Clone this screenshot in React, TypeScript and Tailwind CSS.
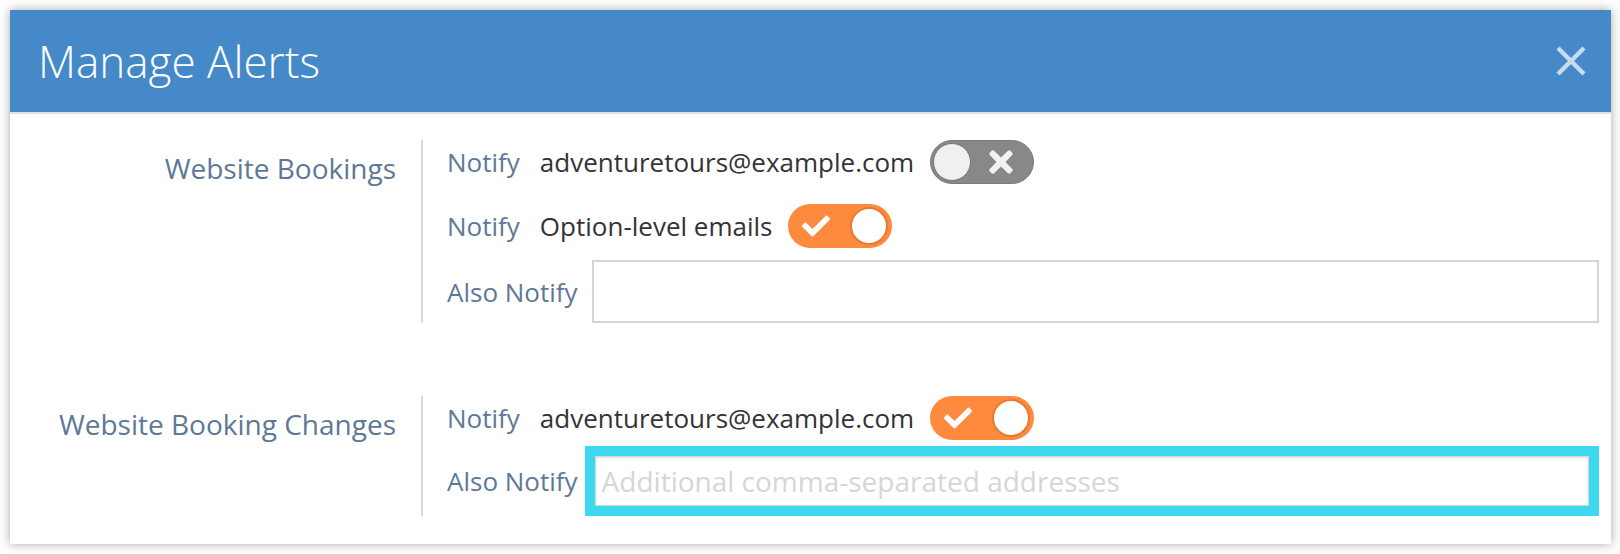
import React from "react";
import { FaCheck, FaTimes } from "react-icons/fa";

const font = { fontFamily: '"Open Sans", "Liberation Sans", sans-serif' };

type ToggleProps = { on: boolean };

const Toggle = ({ on }: ToggleProps) => {
  if (on) {
    return (
      <div className="relative flex h-[44px] w-[104px] shrink-0 items-center rounded-full bg-[#fd8a3d]">
        <FaCheck className="ml-[14px] text-[28px] text-white" />
        <div className="absolute right-[4px] top-[3px] h-[38px] w-[38px] rounded-full border-2 border-[#e87a30] bg-white" />
      </div>
    );
  }
  return (
    <div className="relative flex h-[44px] w-[104px] shrink-0 items-center justify-end rounded-full border border-[#7c7c7c] bg-[#888888]">
      <FaTimes className="mr-[15px] text-[34px] text-[#f2f2f2]" />
      <div className="absolute left-[2px] top-[2px] h-[38px] w-[38px] rounded-full border border-[#777] bg-[#f0f0f0]" />
    </div>
  );
};

const Label = ({ children }: { children: React.ReactNode }) => (
  <span className="shrink-0 text-[26px] leading-none text-[#5e7897]">{children}</span>
);

const App = () => {
  return (
    <div className="min-h-screen bg-white p-[10px]" style={font}>
      <div className="w-[1601px] bg-white shadow-[0_0_10px_rgba(0,0,0,0.35)]">
        <div className="flex h-[102px] items-center justify-between bg-[#4589c9] pl-[28px] pr-[24px]">
          <h1 className="text-[44px] font-light leading-none text-white">Manage Alerts</h1>
          <svg width="32" height="32" viewBox="0 0 32 32" className="opacity-70">
            <path d="M3 3 L29 29 M29 3 L3 29" stroke="white" strokeWidth="4.5" />
          </svg>
        </div>
        <div className="h-[2px] bg-[#e2e2e2]" />

        <div className="flex flex-col gap-[73px] pb-[28px] pt-[26px]">
          <div className="grid grid-cols-[411px_1fr]">
            <div className="pr-[25px] pt-[14px] text-right text-[28px] leading-none text-[#5e7897]">
              Website Bookings
            </div>
            <div className="flex flex-col border-l-2 border-[#d9d9d9] pl-[24px] pr-[12px]">
              <div className="flex h-[44px] items-center">
                <Label>Notify</Label>
                <span className="ml-[20px] mr-[16px] text-[26px] leading-none text-[#333]">
                  adventuretours@example.com
                </span>
                <Toggle on={false} />
              </div>
              <div className="mt-[20px] flex h-[44px] items-center">
                <Label>Notify</Label>
                <span className="ml-[20px] mr-[16px] text-[26px] leading-none text-[#333]">
                  Option-level emails
                </span>
                <Toggle on={true} />
              </div>
              <div className="mt-[12px] flex items-center gap-[14px]">
                <Label>Also Notify</Label>
                <input
                  className="h-[63px] flex-1 border-2 border-[#d4d4d4] bg-white px-[10px] text-[26px] outline-none"
                  style={font}
                />
              </div>
            </div>
          </div>

          <div className="grid grid-cols-[411px_1fr]">
            <div className="pr-[25px] pt-[14px] text-right text-[28px] leading-none text-[#5e7897]">
              Website Booking Changes
            </div>
            <div className="flex flex-col border-l-2 border-[#d9d9d9] pl-[24px] pr-[12px]">
              <div className="flex h-[44px] items-center">
                <Label>Notify</Label>
                <span className="ml-[20px] mr-[16px] text-[26px] leading-none text-[#333]">
                  adventuretours@example.com
                </span>
                <Toggle on={true} />
              </div>
              <div className="mt-[6px] flex items-center gap-[7px]">
                <Label>Also Notify</Label>
                <div className="flex-1 border-[10px] border-[#3dd9ee]">
                  <input
                    placeholder="Additional comma-separated addresses"
                    className="block h-[50px] w-full border border-[#d8d8d8] bg-white px-[6px] text-[28px] shadow-[inset_0_1px_3px_rgba(0,0,0,0.12)] outline-none placeholder:text-[#d6d6d6]"
                    style={font}
                  />
                </div>
              </div>
            </div>
          </div>
        </div>
      </div>
    </div>
  );
};

export default App;
